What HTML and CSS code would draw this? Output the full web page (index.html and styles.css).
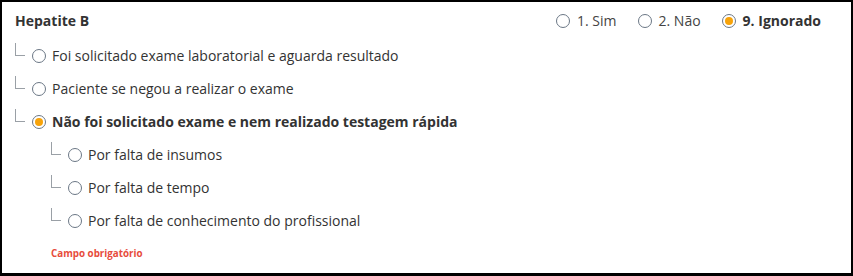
FILE: index.html
```html
<!DOCTYPE html>
<html lang="pt">
<head>
<meta charset="utf-8">
<link rel="stylesheet" href="styles.css">
</head>
<body>
<div class="card">
  <div class="header">
    <div class="title">Hepatite B</div>
    <div class="options">
      <label class="opt"><span class="radio"></span>1. Sim</label>
      <label class="opt"><span class="radio"></span>2. Não</label>
      <label class="opt sel"><span class="radio checked"></span>9. Ignorado</label>
    </div>
  </div>
  <div class="row"><span class="branch"></span><span class="radio"></span><span class="text">Foi solicitado exame laboratorial e aguarda resultado</span></div>
  <div class="row"><span class="branch"></span><span class="radio"></span><span class="text">Paciente se negou a realizar o exame</span></div>
  <div class="row"><span class="branch"></span><span class="radio checked"></span><span class="text bold">Não foi solicitado exame e nem realizado testagem rápida</span></div>
  <div class="row sub"><span class="branch"></span><span class="radio"></span><span class="text">Por falta de insumos</span></div>
  <div class="row sub"><span class="branch"></span><span class="radio"></span><span class="text">Por falta de tempo</span></div>
  <div class="row sub"><span class="branch"></span><span class="radio"></span><span class="text">Por falta de conhecimento do profissional</span></div>
  <div class="error">Campo obrigatório</div>
</div>
</body>
</html>
```
FILE: styles.css
```css
* { box-sizing: border-box; }
html, body { margin: 0; padding: 0; background: #fff; }
body { font-family: "Open Sans", "Noto Sans", sans-serif; color: #333; }
.card {
  width: 853px;
  height: 276px;
  border: 2px solid #000;
  border-bottom-width: 3px;
  padding: 0 30px 0 13px;
}
.header {
  height: 37px;
  display: flex;
  align-items: center;
  justify-content: space-between;
}
.title { font-weight: 700; font-size: 14px; }
.options { display: flex; gap: 21px; font-size: 14px; }
.opt { display: flex; align-items: center; color: #444; }
.opt .radio { margin-right: 7px; }
.opt.sel { font-weight: 700; color: #333; }
.radio {
  display: inline-block;
  width: 14px;
  height: 14px;
  border: 1px solid #6b7785;
  border-radius: 50%;
  background: #fff;
  flex: none;
  position: relative;
}
.radio.checked::after {
  content: "";
  position: absolute;
  left: 2px; top: 2px;
  width: 8px; height: 8px;
  border-radius: 50%;
  background: #f7a30a;
}
.row {
  height: 33px;
  display: flex;
  align-items: center;
  font-size: 14px;
}
.row.sub { padding-left: 36px; }
.branch {
  width: 10px;
  height: 13px;
  border-left: 1px solid #9aa0a6;
  border-bottom: 1px solid #9aa0a6;
  margin: -12px 7px 0 0;
  flex: none;
}
.text { margin-left: 6px; }
.bold { font-weight: 700; }
.error {
  margin-top: 10px;
  padding-left: 38px;
  font-size: 9.8px;
  font-weight: 700;
  color: #e74c3c;
  margin-left: -2px;
}
```
